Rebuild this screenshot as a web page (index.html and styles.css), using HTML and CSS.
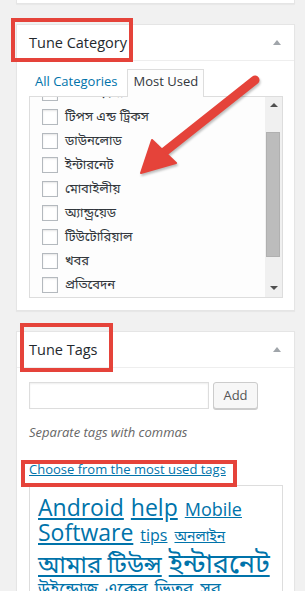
FILE: index.html
```html
<!DOCTYPE html>
<html lang="bn">

<head>
    <meta charset="UTF-8">
    <meta name="viewport" content="width=device-width, initial-scale=1.0">
    <title>Tune Category</title>
    <link rel="stylesheet" href="styles.css">
</head>

<body>
    <div class="wrap">
        <div class="postbox stub"></div>

        <div class="postbox">
            <h2 class="hndle">Tune Category <span class="toggle"></span></h2>
            <div class="inside">
                <ul class="category-tabs">
                    <li><a href="#">All Categories</a></li>
                    <li class="active">Most Used</li>
                </ul>
                <div class="tabs-panel">
                    <div class="panel-view">
                        <ul class="checklist">
                            <li><input type="checkbox"> <span>সফটওয়্যার</span></li>
                            <li><input type="checkbox"> <span>টিপস এন্ড ট্রিকস</span></li>
                            <li><input type="checkbox"> <span>ডাউনলোড</span></li>
                            <li><input type="checkbox"> <span>ইন্টারনেট</span></li>
                            <li><input type="checkbox"> <span>মোবাইলীয়</span></li>
                            <li><input type="checkbox"> <span>অ্যান্ড্রয়েড</span></li>
                            <li><input type="checkbox"> <span>টিউটোরিয়াল</span></li>
                            <li><input type="checkbox"> <span>খবর</span></li>
                            <li><input type="checkbox"> <span>প্রতিবেদন</span></li>
                            <li><input type="checkbox"> <span>উইন্ডোজ</span></li>
                        </ul>
                    </div>
                    <div class="scrollbar">
                        <span class="sb-btn"><span class="tri-up"></span></span>
                        <span class="sb-track"><span class="sb-thumb"></span></span>
                        <span class="sb-btn"><span class="tri-down"></span></span>
                    </div>
                </div>
            </div>
            <span class="mark mark-cat"></span>
        </div>

        <div class="postbox">
            <h2 class="hndle">Tune Tags <span class="toggle"></span></h2>
            <div class="inside tags-inside">
                <div class="ajaxtag">
                    <input type="text" class="newtag">
                    <button class="button">Add</button>
                </div>
                <p class="howto">Separate tags with commas</p>
                <p class="choose"><a href="#">Choose from the most used tags</a></p>
                <div class="tagcloud">
                    <a href="#" class="s23">Android</a>
                    <a href="#" class="s23">help</a>
                    <a href="#" class="s18">Mobile</a>
                    <a href="#" class="s23">Software</a>
                    <a href="#" class="s16">tips</a>
                    <a href="#" class="s14">অনলাইন</a>
                    <a href="#" class="s24 tall">আমার টিউন্স</a>
                    <a href="#" class="s27 tall">ইন্টারনেট</a>
                    <a href="#" class="s17">উইন্ডোজ</a>
                    <a href="#" class="s17">একের</a>
                    <a href="#" class="s17">ভিতর</a>
                    <a href="#" class="s17">সব</a>
                    <a href="#" class="s12">এখন দেখি</a>
                </div>
            </div>
            <span class="mark mark-tags"></span>
            <span class="mark mark-choose"></span>
        </div>
    </div>

    <svg class="pointer" width="305" height="591" viewBox="0 0 305 591">
        <g class="arrow">
            <line x1="255" y1="80" x2="163" y2="153" />
            <polygon points="152,140 176,163 141,173" />
        </g>
    </svg>
</body>

</html>
```

FILE: styles.css
```css
* {
    padding: 0;
    margin: 0;
    box-sizing: border-box;
}

body {
    background-color: #f1f1f1;
    font-family: "Open Sans", "Noto Sans Bengali", "Lohit Bengali", "Noto Sans", sans-serif;
    font-size: 13px;
    color: #32373c;
    position: relative;
    overflow: hidden;
    height: 591px;
}

.wrap {
    padding: 0 10px 0 16px;
}

.postbox {
    position: relative;
    background-color: #fff;
    border: 1px solid #e5e5e5;
    box-shadow: 0 1px 1px rgba(0, 0, 0, 0.04);
    margin-bottom: 20px;
}

.postbox.stub {
    height: 4px;
    border-top: none;
}

.hndle {
    display: flex;
    justify-content: space-between;
    align-items: center;
    height: 36px;
    padding: 0 12px;
    font-size: 14.5px;
    font-weight: normal;
    color: #23282d;
    border-bottom: 1px solid #eee;
}

.toggle {
    width: 0;
    height: 0;
    border-left: 4px solid transparent;
    border-right: 4px solid transparent;
    border-bottom: 5px solid #a0a5aa;
    margin-right: 1px;
}

.inside {
    padding: 8px 11px 12px 12px;
}

/* tabs */
.category-tabs {
    display: flex;
    gap: 4px;
    list-style: none;
    line-height: 1.35;
}

.category-tabs li {
    padding: 3px 5px 5px;
    border: 1px solid transparent;
    border-bottom: none;
}

.category-tabs li a {
    color: #0073aa;
    text-decoration: none;
}

.category-tabs li.active {
    color: #32373c;
    background-color: #fdfdfd;
    border-color: #ddd;
    position: relative;
    margin-bottom: -1px;
    padding-bottom: 6px;
}

.tabs-panel {
    display: flex;
    height: 202px;
    border: 1px solid #ddd;
    background-color: #fdfdfd;
}

.panel-view {
    flex: 1;
    overflow: hidden;
    padding: 0 12px;
}

/* list is shown scrolled down a bit */
.checklist {
    list-style: none;
    margin-top: -16px;
}

.checklist li {
    display: flex;
    align-items: center;
    gap: 7px;
    height: 24px;
    font-size: 13px;
    color: #32373c;
    white-space: nowrap;
}

.checklist input {
    appearance: none;
    -webkit-appearance: none;
    width: 16px;
    height: 16px;
    flex-shrink: 0;
    border: 1px solid #b4b9be;
    background-color: #fff;
    box-shadow: inset 0 1px 2px rgba(0, 0, 0, 0.1);
}

/* scrollbar */
.scrollbar {
    width: 17px;
    display: flex;
    flex-direction: column;
    background-color: #f0f0f0;
}

.sb-btn {
    height: 17px;
    display: flex;
    align-items: center;
    justify-content: center;
}

.tri-up,
.tri-down {
    width: 0;
    height: 0;
    border-left: 4px solid transparent;
    border-right: 4px solid transparent;
}

.tri-up {
    border-bottom: 4px solid #505050;
}

.tri-down {
    border-top: 4px solid #505050;
}

.sb-track {
    flex: 1;
    padding: 18px 2px 0 1px;
}

.sb-thumb {
    display: block;
    height: 125px;
    background-color: #bcbcbc;
    border: 1px solid #b0b0b0;
}

/* tags */
.tags-inside {
    padding-top: 14px;
}

.ajaxtag {
    display: flex;
    gap: 4px;
}

.newtag {
    width: 180px;
    height: 27px;
    border: 1px solid #ddd;
    box-shadow: inset 0 1px 2px rgba(0, 0, 0, 0.07);
    background-color: #fff;
}

.button {
    width: 45px;
    height: 27px;
    font-family: inherit;
    font-size: 13px;
    color: #555;
    background-color: #f7f7f7;
    border: 1px solid #ccc;
    border-radius: 3px;
    box-shadow: 0 1px 0 #ccc;
}

.howto {
    margin-top: 14px;
    font-style: italic;
    color: #666;
    line-height: 18px;
}

.choose {
    margin-top: 19px;
    line-height: 18px;
}

.choose a {
    color: #0073aa;
}

.tagcloud {
    margin-top: 7px;
    border: 1px solid #ddd;
    background-color: #fff;
    padding: 9px 8px 8px;
    display: flex;
    flex-wrap: wrap;
    align-items: baseline;
    column-gap: 7px;
    line-height: 1.1;
}

.tagcloud a {
    color: #0073aa;
    white-space: nowrap;
}

.tagcloud .tall {
    line-height: 1.3;
}

.s12 { font-size: 12px; }
.s14 { font-size: 14px; }
.s16 { font-size: 16px; }
.s17 { font-size: 17px; }
.s18 { font-size: 18px; }
.s23 { font-size: 23px; }
.s24 { font-size: 24px; }
.s27 { font-size: 27px; }

/* red annotation boxes */
.mark {
    position: absolute;
    border: 4px solid #e5433a;
}

.mark-cat {
    left: -6px;
    top: -7px;
    width: 122px;
    height: 44px;
}

.mark-tags {
    left: 3px;
    top: -9px;
    width: 93px;
    height: 49px;
}

.mark-choose {
    left: 4px;
    top: 128px;
    width: 216px;
    height: 27px;
}

.pointer {
    position: absolute;
    top: 0;
    left: 0;
    pointer-events: none;
}

.arrow {
    filter: drop-shadow(1px 2px 1px rgba(0, 0, 0, 0.25));
}

.arrow line {
    stroke: #e5433a;
    stroke-width: 9;
    stroke-linecap: round;
}

.arrow polygon {
    fill: #e5433a;
    stroke: #e5433a;
    stroke-width: 2;
    stroke-linejoin: round;
}
```
